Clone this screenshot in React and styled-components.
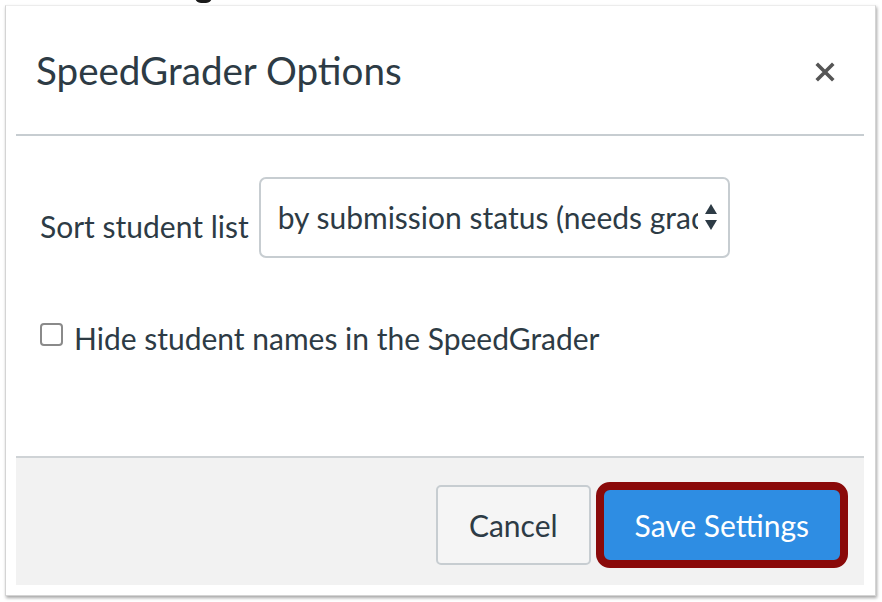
import React, { useState } from 'react';
import styled, { createGlobalStyle } from 'styled-components';

const GlobalStyle = createGlobalStyle`
  html, body {
    margin: 0;
    padding: 0;
    background: #ffffff;
  }
  body {
    font-family: Lato, "Open Sans", sans-serif;
    color: #2d3b45;
  }
`;

const Page = styled.div`
  width: 882px;
  height: 602px;
  overflow: hidden;
  position: relative;
`;

/* bottom of a glyph from the page above, cut off by the crop */
const CutOff = styled.div`
  position: absolute;
  top: -3px;
  left: 195px;
  width: 17px;
  height: 6px;
  border-radius: 0 0 9px 9px;
  background: #1a1a1a;
`;

const Dialog = styled.div`
  margin: 5px 0 0 5px;
  width: 871px;
  height: 591px;
  box-sizing: border-box;
  border: 1px solid #d4d4d4;
  border-top-color: #ececec;
  box-shadow: 1px 2px 3px rgba(0, 0, 0, 0.35);
  background: #fff;
  padding: 0 11px 10px 10px;
  display: flex;
  flex-direction: column;
`;

const Header = styled.div`
  height: 130px;
  border-bottom: 2px solid #c7cdd1;
  display: flex;
  align-items: center;
  justify-content: space-between;
  padding: 0 28px 0 20px;
  box-sizing: border-box;
`;

const Title = styled.h2`
  margin: 0;
  font-size: 38.6px;
  font-weight: 400;
  color: #2d3b45;
`;

const CloseButton = styled.button`
  background: none;
  border: none;
  padding: 0;
  margin-top: 4px;
  width: 22px;
  height: 22px;
  display: flex;
  align-items: center;
  justify-content: center;
  cursor: pointer;
`;

const Body = styled.div`
  flex: 1;
  padding: 41px 24px 0 24px;
  display: flex;
  flex-direction: column;
`;

const SortRow = styled.div`
  display: flex;
  align-items: center;
  gap: 10px;
`;

const Label = styled.label`
  font-size: 30px;
  color: #2d3b45;
  padding-top: 16px;
`;

const SelectBox = styled.div`
  width: 471px;
  height: 81px;
  box-sizing: border-box;
  border: 2px solid #c7cdd1;
  border-radius: 7px;
  display: flex;
  align-items: center;
  padding: 0 10px 2px 17px;
  gap: 6px;
  font-size: 30px;
  color: #2d3b45;
`;

const SelectText = styled.span`
  flex: 1;
  white-space: nowrap;
  overflow: hidden;
`;

const CheckRow = styled.label`
  display: flex;
  align-items: center;
  gap: 11px;
  margin-top: 62px;
  font-size: 30px;
  color: #2d3b45;
  cursor: pointer;
`;

const Box = styled.span`
  flex: none;
  width: 19px;
  height: 19px;
  border: 2px solid #8a8a8a;
  border-radius: 4px;
  background: ${props => (props.checked ? '#2d8ee3' : '#fff')};
  margin-top: -8px;
`;

const Footer = styled.div`
  height: 129px;
  box-sizing: border-box;
  border-top: 2px solid #cfd3d6;
  background: #f2f2f2;
  display: flex;
  align-items: center;
  justify-content: flex-end;
  gap: 5px;
  padding: 6px 16px 0 0;
`;

const Button = styled.button`
  font-family: Lato, "Open Sans", sans-serif;
  font-size: 30px;
  cursor: pointer;
  box-sizing: border-box;
  white-space: nowrap;
  height: ${props => (props.primary ? '86px' : '80px')};
  padding: ${props => (props.primary ? '0 31px' : '0 31px')};
  background: ${props => (props.primary ? '#2e8de3' : '#f5f5f5')};
  color: ${props => (props.primary ? '#ffffff' : '#2d3b45')};
  border: ${props => (props.primary ? '8px solid #8a0a0a' : '2px solid #c7cdd1')};
  border-radius: ${props => (props.primary ? '14px' : '5px')};
`;

const SortArrows = () => (
  <svg width="14" height="28" viewBox="0 0 14 28" style={{ flex: 'none' }}>
    <path d="M7 1 L13 11 L1 11 Z" fill="#2d3b45" />
    <path d="M7 27 L13 17 L1 17 Z" fill="#2d3b45" />
  </svg>
);

const CloseIcon = () => (
  <svg width="20" height="20" viewBox="0 0 20 20">
    <path d="M3 3 L17 17 M17 3 L3 17" stroke="#555" strokeWidth="3.6" strokeLinecap="square" />
  </svg>
);

export default function App() {
  const [hide, setHide] = useState(false);

  return (
    <Page>
      <GlobalStyle />
      <CutOff />
      <Dialog>
        <Header>
          <Title>SpeedGrader Options</Title>
          <CloseButton aria-label="Close">
            <CloseIcon />
          </CloseButton>
        </Header>
        <Body>
          <SortRow>
            <Label>Sort student list</Label>
            <SelectBox>
              <SelectText>by submission status (needs grading)</SelectText>
              <SortArrows />
            </SelectBox>
          </SortRow>
          <CheckRow onClick={() => setHide(!hide)}>
            <Box checked={hide} />
            Hide student names in the SpeedGrader
          </CheckRow>
        </Body>
        <Footer>
          <Button>Cancel</Button>
          <Button primary>Save Settings</Button>
        </Footer>
      </Dialog>
    </Page>
  );
}
